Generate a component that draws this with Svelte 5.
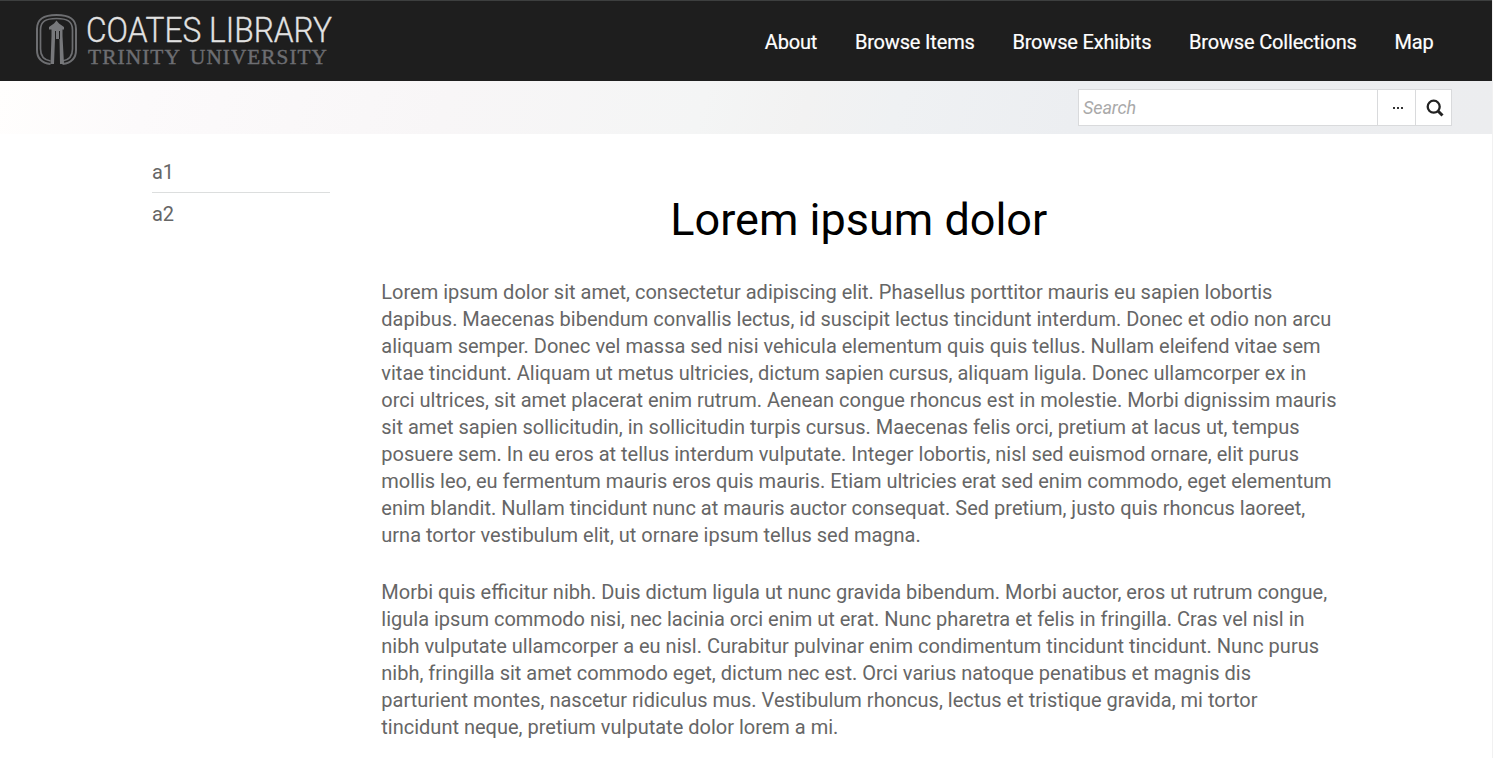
<script>
  const nav = ['About', 'Browse Items', 'Browse Exhibits', 'Browse Collections', 'Map'];
  const sections = ['a1', 'a2'];
  const paragraphs = [
    [
      'Lorem ipsum dolor sit amet, consectetur adipiscing elit. Phasellus porttitor mauris eu sapien lobortis',
      'dapibus. Maecenas bibendum convallis lectus, id suscipit lectus tincidunt interdum. Donec et odio non arcu',
      'aliquam semper. Donec vel massa sed nisi vehicula elementum quis quis tellus. Nullam eleifend vitae sem',
      'vitae tincidunt. Aliquam ut metus ultricies, dictum sapien cursus, aliquam ligula. Donec ullamcorper ex in',
      'orci ultrices, sit amet placerat enim rutrum. Aenean congue rhoncus est in molestie. Morbi dignissim mauris',
      'sit amet sapien sollicitudin, in sollicitudin turpis cursus. Maecenas felis orci, pretium at lacus ut, tempus',
      'posuere sem. In eu eros at tellus interdum vulputate. Integer lobortis, nisl sed euismod ornare, elit purus',
      'mollis leo, eu fermentum mauris eros quis mauris. Etiam ultricies erat sed enim commodo, eget elementum',
      'enim blandit. Nullam tincidunt nunc at mauris auctor consequat. Sed pretium, justo quis rhoncus laoreet,',
      'urna tortor vestibulum elit, ut ornare ipsum tellus sed magna.'
    ],
    [
      'Morbi quis efficitur nibh. Duis dictum ligula ut nunc gravida bibendum. Morbi auctor, eros ut rutrum congue,',
      'ligula ipsum commodo nisi, nec lacinia orci enim ut erat. Nunc pharetra et felis in fringilla. Cras vel nisl in',
      'nibh vulputate ullamcorper a eu nisl. Curabitur pulvinar enim condimentum tincidunt tincidunt. Nunc purus',
      'nibh, fringilla sit amet commodo eget, dictum nec est. Orci varius natoque penatibus et magnis dis',
      'parturient montes, nascetur ridiculus mus. Vestibulum rhoncus, lectus et tristique gravida, mi tortor',
      'tincidunt neque, pretium vulputate dolor lorem a mi.'
    ]
  ];
</script>

<div class="page">
  <header>
    <svg class="logo" width="304" height="60" viewBox="32 8 304 60" role="img" aria-label="Coates Library, Trinity University">
      <g fill="none" stroke="#6d6e71">
        <path stroke-width="2" d="M50.5 64C42 63 37 58 37 50V29C37 19 43.500 15 56.500 15S76 19 76 29V50C76 58 71 63 62.500 64" />
        <path stroke-width="1.700" d="M50.500 61C44 60 40.500 56 40.500 49V30C40.500 21 46 18.500 56.500 18.500S72.500 21 72.500 30V49C72.500 56 69 60 62.500 61" />
      </g>
      <path fill="#77787b" d="M56.500 20.500L59 23.500L64 27V29.500H62.500V36L64 64H60L59.500 39H55L54 64H50.500L51.500 36V29.500H49V27L54 23.500Z" />
      <path fill="none" stroke="#1e1e1e" stroke-width="1" d="M55.500 31V39M59.500 31V39" />
      <text class="name" x="86" y="41.500" textLength="246" lengthAdjust="spacingAndGlyphs">COATES LIBRARY</text>
      <text class="school" x="88" y="64" textLength="93" lengthAdjust="spacingAndGlyphs">TRINITY</text>
      <text class="school" x="190" y="64" textLength="138" lengthAdjust="spacingAndGlyphs">UNIVERSITY</text>
    </svg>
    <nav>
      {#each nav as item}
        <a href="#top">{item}</a>
      {/each}
    </nav>
  </header>
  <div class="searchbar">
    <form>
      <input type="text" placeholder="Search" aria-label="Search" />
      <button type="button" class="more" aria-label="Options"><i></i><i></i><i></i></button>
      <button type="button" class="go" aria-label="Submit">
        <svg width="18" height="18" viewBox="0 0 18 18" fill="none" stroke="#222" stroke-width="2.300">
          <circle cx="7.700" cy="7.700" r="6" />
          <path d="M12 12L16.500 16.500" stroke-width="3" />
        </svg>
      </button>
    </form>
  </div>
  <div class="content">
    <aside>
      {#each sections as s}
        <a href="#top">{s}</a>
      {/each}
    </aside>
    <main>
      <h1>Lorem ipsum dolor</h1>
      {#each paragraphs as lines}
        <p>
          {#each lines as line}
            <span>{line}</span>
          {/each}
        </p>
      {/each}
    </main>
  </div>
</div>

<style>
  :global(body) {
    margin: 0;
    background: #fff;
    overflow: hidden;
  }
  .page {
    box-sizing: border-box;
    height: 758px;
    overflow: hidden;
    border-right: 1px solid #f1f1f1;
    font-family: Roboto, 'Liberation Sans', sans-serif;
    font-size: 20px;
    color: #666;
  }
  header {
    box-sizing: border-box;
    height: 81px;
    border-top: 1px solid #3d3f3f;
    background: #1e1e1e;
    display: flex;
    justify-content: space-between;
    padding: 7px 58.500px 0 32px;
  }
  .logo {
    overflow: visible;
  }
  .name {
    font: 300 35px Roboto, sans-serif;
    fill: #e2e2e2;
    stroke: #e2e2e2;
    stroke-width: 0.3px;
  }
  .school {
    font: 20px 'Liberation Serif', serif;
    letter-spacing: 1px;
    fill: #6d6e72;
    stroke: #6d6e72;
    stroke-width: 0.4px;
  }
  nav {
    display: flex;
    gap: 37.700px;
    padding-top: 22px;
  }
  nav a {
    color: #fff;
    font-size: 20px;
    letter-spacing: -0.170px;
    line-height: 24px;
    text-decoration: none;
    white-space: nowrap;
    -webkit-text-stroke: 0.200px #fff;
  }
  .searchbar {
    box-sizing: border-box;
    height: 53px;
    padding: 8px 40px 0;
    background: linear-gradient(105deg, #fffefd 0%, #fcfafb 10%, #f8f6f7 30%, #f4f5f5 47%, #f2f2f2 54%, #eff1f3 60%, #eceef1 72%, #ecedef 100%);
  }
  form {
    display: flex;
    box-sizing: border-box;
    width: 374px;
    height: 37px;
    margin-left: auto;
    border: 1px solid #d9dadc;
    background: #fff;
  }
  input {
    flex: 1;
    min-width: 0;
    border: 0;
    padding: 0 4px;
    outline: 0;
    background: transparent;
    font: italic 18px Roboto, sans-serif;
    letter-spacing: -0.100px;
  }
  input::placeholder {
    color: #a9a9a9;
    opacity: 1;
  }
  button {
    display: flex;
    align-items: center;
    justify-content: center;
    box-sizing: border-box;
    border: 0;
    border-left: 1px solid #d9dadc;
    padding: 0;
    background: #fff;
  }
  .more {
    width: 38px;
    gap: 2px;
    padding-left: 2px;
  }
  .more i {
    width: 2px;
    height: 2px;
    background: #333;
  }
  .go {
    width: 36px;
    padding-left: 2px;
  }
  .content {
    display: grid;
    grid-template-columns: 178px 955px;
    column-gap: 51.300px;
    padding-left: 152px;
  }
  aside {
    padding-top: 17px;
  }
  aside a {
    display: block;
    height: 41px;
    line-height: 42px;
    color: #666;
    text-decoration: none;
    letter-spacing: -0.200px;
  }
  aside a:first-child {
    border-bottom: 1px solid #dcdede;
  }
  h1 {
    margin: 58px 0 31px;
    color: #000;
    font-size: 45px;
    font-weight: 400;
    line-height: 56px;
    text-align: center;
  }
  p {
    margin: 0 0 30px;
    line-height: 27px;
  }
  p span {
    display: block;
    white-space: nowrap;
  }
</style>
